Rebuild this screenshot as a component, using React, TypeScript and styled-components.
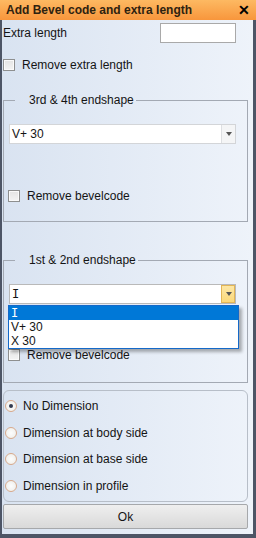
import styled, { createGlobalStyle } from "styled-components";

const Global = createGlobalStyle`
  html, body { margin: 0; padding: 0; background: #4d5566; }
  body { font-family: "Liberation Sans", Arial, sans-serif; font-size: 12px; color: #141414; }
  * { box-sizing: border-box; }
`;

const Window = styled.div`
  width: 256px;
  height: 538px;
  display: flex;
  flex-direction: column;
  border-left: 2px solid #4d5566;
  border-right: 3px solid #4d5566;
  border-bottom: 4px solid #4d5566;
  background: linear-gradient(to right, #d9e3f1, #eef3fa);
`;

const TitleBar = styled.div`
  height: 20px;
  margin-left: -2px;
  margin-right: -3px;
  display: flex;
  align-items: center;
  justify-content: space-between;
  padding: 0 6px 0 6px;
  background: linear-gradient(#fdb962, #f8963c);
  font-weight: bold;
  font-size: 12px;
  color: #2e2210;
`;

const Close = styled.span`
  font-size: 14px;
  font-weight: bold;
  color: #000;
  line-height: 1;
`;

const Body = styled.div`
  flex: 1;
  display: flex;
  flex-direction: column;
  padding: 0 5px 5px 1px;
`;

const FieldRow = styled.div`
  display: flex;
  align-items: center;
  justify-content: space-between;
  margin-top: 3px;
  padding-right: 12px;
`;

const TextInput = styled.div`
  width: 76px;
  height: 20px;
  background: #fff;
  border: 1px solid #a9a9a9;
`;

const CheckRow = styled.label<{ $top: number; $left?: number }>`
  display: flex;
  align-items: center;
  gap: 7px;
  margin-top: ${(p) => p.$top}px;
  margin-left: ${(p) => p.$left ?? 0}px;
  height: 12px;
`;

const CheckBox = styled.span`
  width: 12px;
  height: 12px;
  border: 1px solid #8e8f8f;
  background: linear-gradient(#e4e4e4, #f4f4f4);
  box-shadow: inset 0 0 0 1px #fafafa;
`;

const Group = styled.fieldset<{ $top: number; $height: number }>`
  position: relative;
  margin: ${(p) => p.$top}px 0 0 0;
  height: ${(p) => p.$height}px;
  padding: 0 11px 0 5px;
  border: 1px solid #a3a9b3;
  min-width: 0;
`;

const Legend = styled.legend`
  margin-left: 6px;
  padding: 0 2px 0 14px;
  line-height: 14px;
`;

const Combo = styled.div<{ $active?: boolean }>`
  display: flex;
  height: 20px;
  margin-top: 17px;
  background: #fff;
  border: 1px solid ${(p) => (p.$active ? "#b9b9b9" : "#d3d5d8")};
`;

const ComboText = styled.div`
  flex: 1;
  padding-left: 2px;
  display: flex;
  align-items: center;
`;

const ComboButton = styled.div<{ $active?: boolean }>`
  width: 14px;
  display: flex;
  align-items: center;
  justify-content: center;
  background: ${(p) => (p.$active ? "linear-gradient(#fde8a8, #fbd777)" : "#f4f5f6")};
  border-left: 1px solid ${(p) => (p.$active ? "#e3b656" : "#dddfe2")};
  ${(p) => (p.$active ? "outline: 1px solid #e3b656; outline-offset: -1px;" : "")}
`;

const Arrow = styled.span`
  width: 0;
  height: 0;
  border-left: 3px solid transparent;
  border-right: 3px solid transparent;
  border-top: 4px solid #555;
`;

/* Tahoma-like capital I with crossbars */
const SerifI = styled.span`
  font-family: "DejaVu Sans Mono", monospace;
  font-size: 12px;
`;

const DropList = styled.ul`
  position: absolute;
  left: 4px;
  top: 38px;
  width: 231px;
  margin: 0;
  padding: 0;
  list-style: none;
  background: #fff;
  border: 1px solid #1469c9;
  box-shadow: 3px 3px 3px rgba(0, 0, 0, 0.3);
  z-index: 2;
`;

const DropItem = styled.li<{ $selected?: boolean }>`
  height: 14px;
  line-height: 14px;
  padding-left: 2px;
  background: ${(p) => (p.$selected ? "#0078d7" : "transparent")};
  color: ${(p) => (p.$selected ? "#fff" : "#141414")};
`;

const RadioPanel = styled.div`
  margin-top: 7px;
  height: 112px;
  border: 1px solid #b7bec8;
  border-radius: 6px;
  display: flex;
  flex-direction: column;
  padding-top: 9px;
  gap: 14.6px;
`;

const RadioRow = styled.label`
  display: flex;
  align-items: center;
  gap: 6px;
  height: 12px;
  padding-left: 1px;
`;

const Radio = styled.span<{ $checked?: boolean }>`
  width: 12px;
  height: 12px;
  border-radius: 50%;
  border: 1px solid #d8a98b;
  background: radial-gradient(circle, #fdfdfd, #ecece8);
  display: flex;
  align-items: center;
  justify-content: center;
  &::after {
    content: "";
    display: ${(p) => (p.$checked ? "block" : "none")};
    width: 4px;
    height: 4px;
    border-radius: 50%;
    background: #333a50;
  }
`;

const OkButton = styled.div`
  margin-top: 2px;
  height: 25px;
  display: flex;
  align-items: center;
  justify-content: center;
  border: 1px solid #a6a8ab;
  border-radius: 2px;
  background: linear-gradient(#efefef, #d9d9d9);
`;

export default function App() {
  return (
    <>
      <Global />
      <Window>
        <TitleBar>
          <span>Add Bevel code and extra length</span>
          <Close>✕</Close>
        </TitleBar>
        <Body>
          <FieldRow>
            <span>Extra length</span>
            <TextInput />
          </FieldRow>
          <CheckRow $top={16}>
            <CheckBox />
            Remove extra length
          </CheckRow>

          <Group $top={22} $height={129}>
            <Legend>3rd &amp; 4th endshape</Legend>
            <Combo>
              <ComboText>V+ 30</ComboText>
              <ComboButton>
                <Arrow />
              </ComboButton>
            </Combo>
            <CheckRow $top={46} $left={-1}>
              <CheckBox />
              Remove bevelcode
            </CheckRow>
          </Group>

          <Group $top={31} $height={130}>
            <Legend>1st &amp; 2nd endshape</Legend>
            <Combo $active>
              <ComboText>
                <SerifI>I</SerifI>
              </ComboText>
              <ComboButton $active>
                <Arrow />
              </ComboButton>
            </Combo>
            <DropList>
              <DropItem $selected>
                <SerifI>I</SerifI>
              </DropItem>
              <DropItem>V+ 30</DropItem>
              <DropItem>X 30</DropItem>
            </DropList>
            <CheckRow $top={45} $left={-1}>
              <CheckBox />
              Remove bevelcode
            </CheckRow>
          </Group>

          <RadioPanel>
            <RadioRow>
              <Radio $checked />
              No Dimension
            </RadioRow>
            <RadioRow>
              <Radio />
              Dimension at body side
            </RadioRow>
            <RadioRow>
              <Radio />
              Dimension at base side
            </RadioRow>
            <RadioRow>
              <Radio />
              Dimension in profile
            </RadioRow>
          </RadioPanel>
          <OkButton>Ok</OkButton>
        </Body>
      </Window>
    </>
  );
}
